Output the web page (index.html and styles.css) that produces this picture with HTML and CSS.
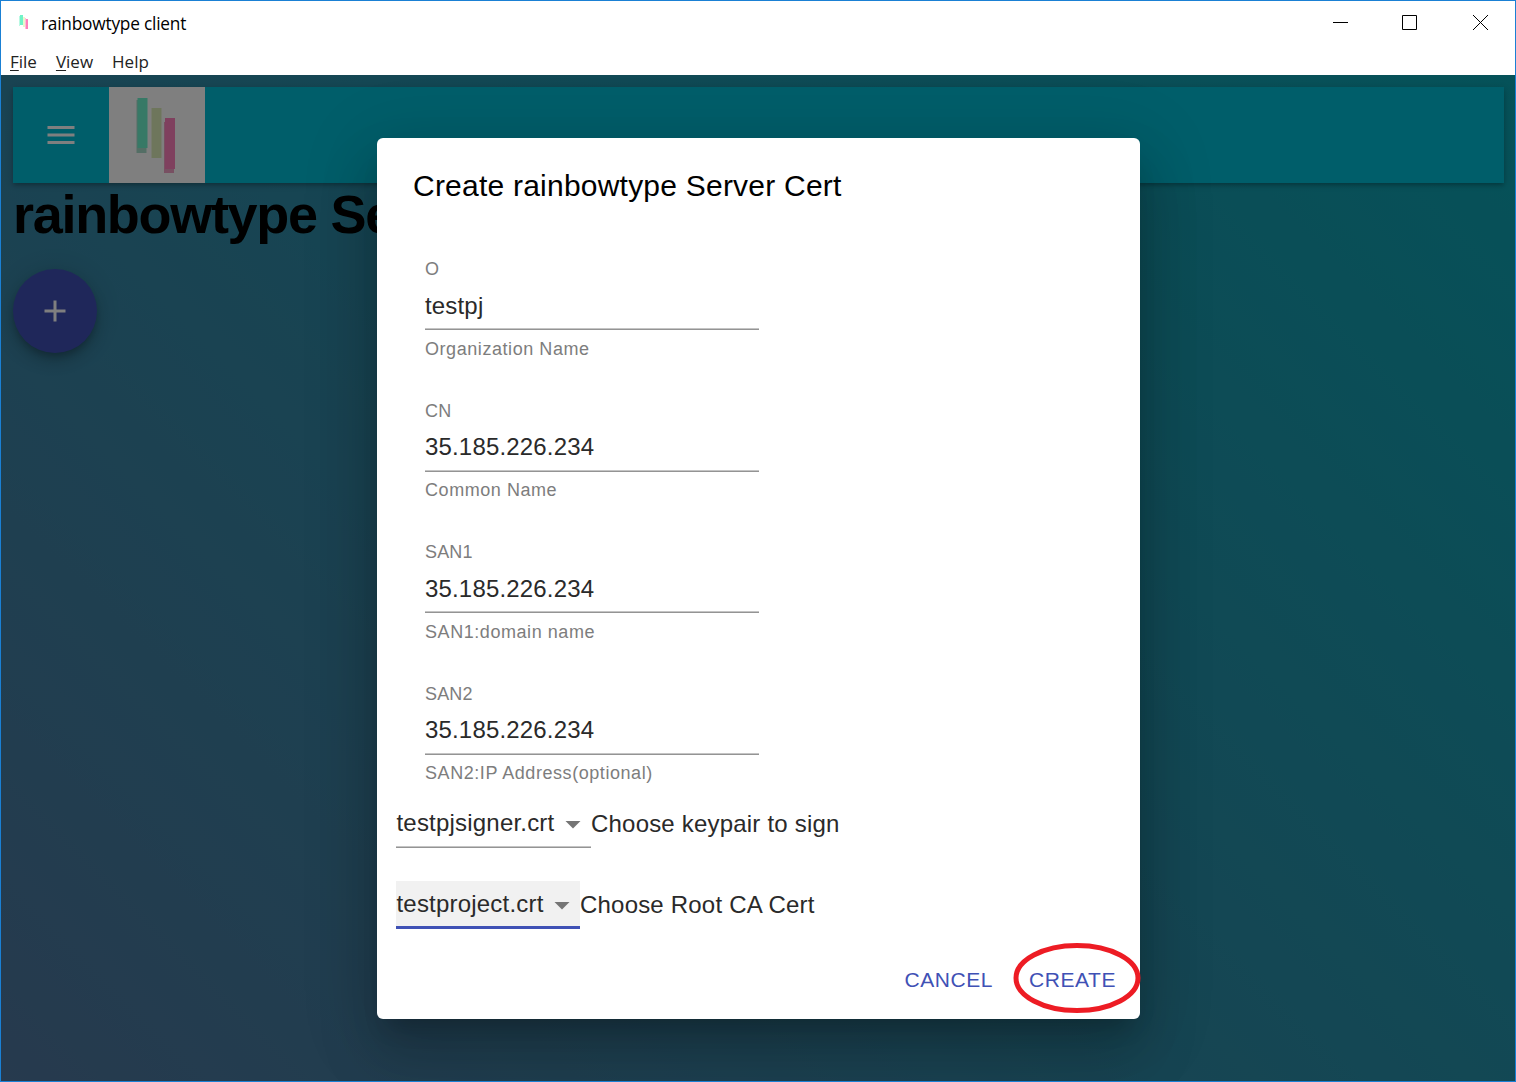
FILE: index.html
```
<!DOCTYPE html>
<html lang="en">
<head>
<meta charset="utf-8">
<title>rainbowtype client</title>
<link rel="stylesheet" href="styles.css">
</head>
<body>
<div class="window">
  <div class="titlebar">
    <svg class="app-icon" width="10" height="16" viewBox="0 0 10 16"><path fill="#70f3c8" d="M1 0h3v10H1z"/><path fill="#b9f9e3" d="M0 1h1v10H0z"/><path fill="#e9f7cd" d="M4 2h2v10H4z"/><path fill="#ff80bb" d="M7 4h2v10H7z"/><path fill="#ffbddb" d="M6 3h1v11H6z"/></svg>
    <span class="app-title">rainbowtype client</span>
    <div class="controls">
      <svg width="15" height="16" viewBox="0 0 15 16"><path fill="#000" d="M0 7h15v1H0z"/></svg>
      <svg width="16" height="16" viewBox="0 0 16 16"><path fill="none" stroke="#000" d="M.5.5h14v14H.5z"/></svg>
      <svg class="close" width="16" height="16" viewBox="0 0 16 16"><path fill="none" stroke="#000" d="M0 0l15 15M15 0L0 15"/></svg>
    </div>
  </div>
  <div class="menubar"><span><u>F</u>ile</span><span><u>V</u>iew</span><span>Help</span></div>
  <main class="page">
    <header class="appbar">
      <div class="menu-button"><svg width="36" height="36" viewBox="0 0 24 24"><path fill="#fff" d="M3 18h18v-2H3v2zm0-5h18v-2H3v2zm0-7v2h18V6H3z"/></svg></div>
      <svg class="logo" width="96" height="96" viewBox="0 0 96 96"><path fill="#fff" d="M0 0h96v96H0z"/><path fill="#a8dccb" d="M27.500 13h10v53h-10z"/><path fill="#6ef2cc" d="M28.500 11h10v50h-10z"/><path fill="#dcecb8" d="M42.500 21h10v50h-10z"/><path fill="#f0a0c4" d="M55 35h10v51H55z"/><path fill="#ff80bc" d="M56 31h10v51H56z"/></svg>
    </header>
    <h1 class="heading">rainbowtype Server Cert</h1>
    <div class="fab"><svg width="36" height="36" viewBox="0 0 24 24"><path fill="#fff" d="M19 13h-6v6h-2v-6H5v-2h6V5h2v6h6v2z"/></svg></div>
    <div class="backdrop">
      <section class="dialog">
        <h2 class="dialog-title">Create rainbowtype Server Cert</h2>
        <div class="fields">
          <div class="field"><label class="label">O</label><div class="value">testpj</div><div class="helper">Organization Name</div></div>
          <div class="field"><label class="label">CN</label><div class="value">35.185.226.234</div><div class="helper">Common Name</div></div>
          <div class="field"><label class="label">SAN1</label><div class="value">35.185.226.234</div><div class="helper">SAN1:domain name</div></div>
          <div class="field"><label class="label">SAN2</label><div class="value">35.185.226.234</div><div class="helper">SAN2:IP Address(optional)</div></div>
        </div>
        <div class="choice">
          <div class="select select-key"><span>testpjsigner.crt</span><svg width="36" height="36" viewBox="0 0 24 24"><path d="M7 10l5 5 5-5z"/></svg></div>
          <span class="caption">Choose keypair to sign</span>
        </div>
        <div class="choice">
          <div class="select select-root"><span>testproject.crt</span><svg width="36" height="36" viewBox="0 0 24 24"><path d="M7 10l5 5 5-5z"/></svg></div>
          <span class="caption">Choose Root CA Cert</span>
        </div>
        <div class="actions">
          <span class="action">CANCEL</span>
          <span class="action">CREATE<svg class="marker" width="128" height="72" viewBox="0 0 128 72"><ellipse cx="64" cy="36" rx="61" ry="32.500" fill="none" stroke="#ed1c24" stroke-width="5"/></svg></span>
        </div>
      </section>
    </div>
  </main>
</div>
</body>
</html>
```
FILE: styles.css
```
* { box-sizing: border-box; }
body { margin: 0; }
svg { display: block; flex: none; }
.window {
  width: 1516px; height: 1082px;
  display: flex; flex-direction: column;
  border: 1px solid #1a80d4;
  background: #fff;
  overflow: hidden;
  font-family: "Liberation Sans", Arial, sans-serif;
}
.titlebar {
  display: flex; align-items: flex-start;
  height: 47px; padding: 14px 26px 0 18px;
  font-family: "Open Sans", "Noto Sans", sans-serif;
  font-size: 17.300px; line-height: 18px; color: #000;
}
.app-title { margin-left: 12px; letter-spacing: -.220px; }
.controls { display: flex; gap: 54px; margin-left: auto; }
.close { margin-left: 1px; }
.menubar {
  display: flex; gap: 19px;
  height: 27px; padding-left: 9px;
  font-family: "Open Sans", "Noto Sans", sans-serif;
  font-size: 17px; line-height: 27px; color: #222;
  letter-spacing: 0;
}
.menubar u { text-underline-offset: 2px; text-decoration-thickness: 1px; }
.page {
  position: relative;
  flex: 1;
  padding: 12px 11px 12px 12px;
  background: linear-gradient(45deg, #4e749c 0%, #0aa4b2 100%);
}
.appbar {
  display: flex;
  width: 1491px; height: 96px;
  background: #00bcd4;
  box-shadow: 0 1.500px 7.500px rgba(0,0,0,.2), 0 3px 3px rgba(0,0,0,.1), 0 3px 3px -3px rgba(0,0,0,.12);
}
.menu-button { width: 96px; display: grid; place-items: center; }
.heading {
  width: 364px; height: 62px;
  margin: 0; padding-top: 1px;
  overflow: hidden; white-space: nowrap;
  font-size: 54px; line-height: 60px; font-weight: 700;
  letter-spacing: -1.300px; color: #000;
}
.fab {
  display: grid; place-items: center;
  width: 84px; height: 84px; margin-top: 24px;
  border-radius: 50%;
  background: #3f4eb5;
  box-shadow: 0 4.500px 7.500px -1.500px rgba(0,0,0,.2), 0 9px 15px rgba(0,0,0,.14), 0 1.500px 27px rgba(0,0,0,.12);
}
.backdrop {
  position: absolute; inset: 0;
  display: grid; place-items: center;
  background: rgba(0,0,0,.5);
}
.dialog {
  display: flex; flex-direction: column;
  width: 763px; height: 881px;
  margin-left: 1px;
  border-radius: 6px;
  background: #fff;
  box-shadow: 0 16.500px 22.500px -10.500px rgba(0,0,0,.2), 0 36px 57px 4.500px rgba(0,0,0,.14), 0 13.500px 69px 12px rgba(0,0,0,.12);
}
.dialog-title {
  margin: 0; padding: 30px 36px 0;
  font-size: 30px; line-height: 36px; font-weight: 400;
  letter-spacing: .225px; color: #000;
}
.fields { padding: 53px 48px 0; }
.field { width: 334px; height: 141.500px; }
.field:nth-child(even) .label { padding-top: .500px; }
.label {
  display: block; height: 24px;
  font-size: 18px; line-height: 24px; letter-spacing: .170px;
  color: #7d7d7d;
}
.value {
  height: 49px; padding-top: 11px;
  background: linear-gradient(#c4c4c4, #c4c4c4) 0 100% / 100% 1px no-repeat;
  border-bottom: 1px solid #949494;
  font-size: 24px; line-height: 28px; letter-spacing: .170px;
  color: #2a2a2a;
}
.field:nth-child(even) .value { height: 49.500px; padding-top: 10.500px; }
.field:nth-child(even) .helper { padding-top: 7.500px; }
.helper {
  padding-top: 8px;
  font-size: 18px; line-height: 22px; letter-spacing: .560px;
  color: #7d7d7d;
}
.choice {
  display: flex;
  height: 48px; margin: -23px 0 56px 19px;
  font-size: 24px; line-height: 28px; letter-spacing: .200px;
  color: #2a2a2a;
}
.choice + .choice { margin: 0; margin-left: 19px; margin-top: -23px; }
.select {
  display: flex; justify-content: space-between; align-items: flex-start;
  padding: 9px 0 0 .500px;
}
.select svg { fill: #757575; margin-top: -3px; }
.select-key {
  width: 195px;
  background: linear-gradient(#c4c4c4, #c4c4c4) 0 100% / 100% 1px no-repeat;
  border-bottom: 1px solid #949494;
}
.select-root { width: 184px; background: #f1f1f1; border-bottom: 3px solid #3f51b5; }
.caption { padding-top: 10px; }
.actions {
  display: flex; justify-content: flex-end; gap: 36px;
  margin-top: 36px; padding-right: 24px;
  font-size: 21px; line-height: 30px; letter-spacing: .550px;
  color: #3f51b5;
}
.action { position: relative; }
.marker { position: absolute; left: -16px; top: -23px; }
```
